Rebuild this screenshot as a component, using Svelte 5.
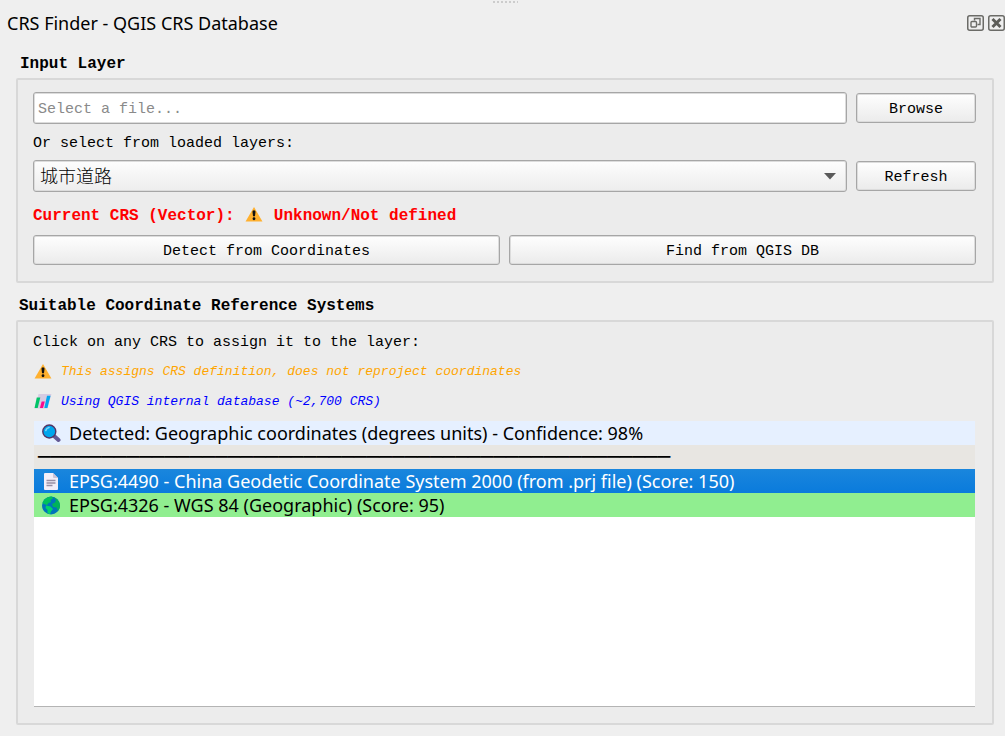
<script>
  let filePath = $state('');
  let layers = ['城市道路'];
  let layer = $state('城市道路');

  let results = [
    { icon: 'page', text: 'EPSG:4490 - China Geodetic Coordinate System 2000 (from .prj file) (Score: 150)' },
    { icon: 'globe', text: 'EPSG:4326 - WGS 84 (Geographic) (Score: 95)' }
  ];
  let selected = $state(0);

  const separator = '─'.repeat(50);
</script>

{#snippet warning()}
  <svg class="icon" viewBox="0 0 20 18" aria-hidden="true">
    <path d="M10 1 L19.5 17.5 H0.5 Z" fill="#ffb02e" />
    <path d="M8.3 6.5 a1.7 1.7 0 0 1 3.4 0 l-.6 5 h-2.2 z" fill="#111" />
    <circle cx="10" cy="14.3" r="1.6" fill="#111" />
  </svg>
{/snippet}

<div class="dock">
  <div class="handle"></div>
  <header>
    <h1>CRS Finder - QGIS CRS Database</h1>
    <button class="tool" aria-label="Float">
      <svg viewBox="0 0 17 16" fill="none" stroke="#6b6b67">
        <rect x="0.75" y="0.75" width="15.5" height="14.5" rx="2" stroke-width="1.5" />
        <path d="M7.5 5.5 V3.5 H13 V9.5 H10.5" stroke-width="1.4" />
        <rect x="4" y="6.5" width="5.5" height="5.5" rx="1" stroke-width="1.4" />
      </svg>
    </button>
    <button class="tool" aria-label="Close">
      <svg viewBox="0 0 17 16" fill="none" stroke="#6b6b67">
        <rect x="0.75" y="0.75" width="15.5" height="14.5" rx="2" stroke-width="1.5" />
        <path d="M4.5 4 L12.5 12 M12.5 4 L4.5 12" stroke="#5c5c58" stroke-width="3" />
      </svg>
    </button>
  </header>

  <h2>Input Layer</h2>
  <section class="group">
    <div class="row">
      <input type="text" placeholder="Select a file..." aria-label="File" bind:value={filePath} />
      <button class="btn side">Browse</button>
    </div>
    <label class="hint" for="layer">Or select from loaded layers:</label>
    <div class="row">
      <div class="combo">
        <select id="layer" bind:value={layer}>
          {#each layers as name}
            <option>{name}</option>
          {/each}
        </select>
        <svg class="arrow" viewBox="0 0 12 7" aria-hidden="true"><path d="M0 0 H12 L6 6.5 Z" fill="#5a5a5a" /></svg>
      </div>
      <button class="btn side">Refresh</button>
    </div>
    <p class="status">Current CRS (Vector): {@render warning()} Unknown/Not defined</p>
    <div class="row">
      <button class="btn">Detect from Coordinates</button>
      <button class="btn">Find from QGIS DB</button>
    </div>
  </section>

  <h2 class="second">Suitable Coordinate Reference Systems</h2>
  <section class="group crs">
    <p class="hint">Click on any CRS to assign it to the layer:</p>
    <p class="note orange">{@render warning()}<span>This assigns CRS definition, does not reproject coordinates</span></p>
    <p class="note blue">
      <svg class="icon" viewBox="0 0 20 18" aria-hidden="true">
        <path d="M5 1 H19.5 L15 17.5 H0.5 Z" fill="#d6cbe2" />
        <path d="M3 5 H7 L4 17 H0.5 Z" fill="#00c467" />
        <path d="M8.5 9.5 H12 L10 17 H6.5 Z" fill="#f70a8d" />
        <path d="M14.5 3 H18.5 L15 17 H11.5 Z" fill="#00a6ed" />
      </svg>
      <span>Using QGIS internal database (~2,700 CRS)</span>
    </p>
    <ul>
      <li class="item detected">
        <svg viewBox="0 0 20 20" aria-hidden="true">
          <path d="M12.5 12.5 L17.5 17" stroke="#635994" stroke-width="4" stroke-linecap="round" />
          <circle cx="8.3" cy="8.5" r="6.5" fill="#00a6ed" stroke="#533566" stroke-width="1.4" />
          <path d="M4.8 7.5 A4.2 4.2 0 0 1 8 4.5" stroke="#7fd3f7" stroke-width="1.6" fill="none" stroke-linecap="round" />
        </svg>
        <span>Detected: Geographic coordinates (degrees units) - Confidence: 98%</span>
      </li>
      <li class="item separator">{separator}</li>
      {#each results as result, i}
        <li>
          <button class="item" class:selected={selected === i} aria-pressed={selected === i} onclick={() => (selected = i)}>
            {#if result.icon === 'page'}
              <svg viewBox="0 0 20 20" aria-hidden="true">
                <path d="M4 2 H12 L17 7 V18 Q17 19 16 19 H4 Q3 19 3 18 V3 Q3 2 4 2 Z" fill="#f3eef8" />
                <path d="M12 2 L17 7 H13 Q12 7 12 6 Z" fill="#cdc4d6" />
                <path d="M5.5 9.5 H14.5 M5.5 12 H14.5 M5.5 14.5 H11.5" stroke="#998ea4" stroke-width="1.3" />
              </svg>
            {:else}
              <svg viewBox="0 0 20 20" aria-hidden="true">
                <circle cx="10" cy="10.5" r="9" fill="#0074ba" />
                <path d="M3 5 Q6 1.5 11 1.5 L12 3.5 L9.5 5 L10 7 L7.5 8 L6 10 L3 9 L1.5 8 Z" fill="#00c15c" />
                <path d="M12.5 2 Q18.5 4.5 19 10.5 Q18.8 13.5 17 15.8 L15.5 12.5 L12 12 L11 9 L14 7.5 L15 5 Z" fill="#00b35a" />
                <path d="M5 10.5 L9.5 11.5 L12 14 L10 16.5 L9 19.3 L6.5 18 L6.5 15 L4.5 13 Z" fill="#00d26a" />
              </svg>
            {/if}
            <span>{result.text}</span>
          </button>
        </li>
      {/each}
    </ul>
  </section>
</div>

<style>
  :global(body) {
    margin: 0;
    background: #efefef;
  }
  .dock {
    box-sizing: border-box;
    display: flex;
    flex-direction: column;
    min-height: 100vh;
    padding: 0 11px 11px 16px;
    font: 15px/20px "Liberation Mono", "Noto Sans CJK SC", monospace;
    color: #000;
  }
  .dock *, .dock *::before {
    box-sizing: border-box;
  }
  h1, h2, p, ul {
    margin: 0;
    padding: 0;
  }
  .handle {
    align-self: center;
    width: 26px;
    height: 4px;
    background: radial-gradient(circle, #ccc 1px, transparent 1px) 0 0 / 4px 4px;
  }
  header {
    display: flex;
    align-items: center;
    gap: 4px;
    height: 37px;
    margin: 0 -11px 0 -9px;
  }
  h1 {
    flex: 1;
    font: 18px/24px "Noto Sans", sans-serif;
  }
  .tool {
    width: 17px;
    height: 16px;
    padding: 0;
    border: none;
    background: none;
  }
  .tool svg {
    display: block;
    width: 17px;
    height: 16px;
  }
  h2 {
    margin: 13px 0 4px 4px;
    font-size: 16px;
    line-height: 20px;
  }
  h2.second {
    margin-left: 3px;
  }
  .group {
    display: flex;
    flex-direction: column;
    gap: 8px;
    padding: 12px 16px 16px 15px;
    border: 2px solid #d8d8d8;
    border-radius: 2px;
    background: #ececec;
  }
  .row {
    display: flex;
    align-items: center;
    gap: 9px;
  }
  .hint {
    padding-top: 4px;
    line-height: 16px;
  }
  input, select {
    flex: 1;
    min-width: 0;
    height: 32px;
    border: 1px solid #a6a6a6;
    border-radius: 3px;
    box-shadow: inset 0 0 0 1px #dcdcdc;
    color: #000;
  }
  input {
    padding: 2px 4px 0;
    background: #fff;
    font: inherit;
  }
  input::placeholder {
    color: #8a8a8a;
  }
  .combo {
    flex: 1;
    display: grid;
    align-items: center;
  }
  .combo > * {
    grid-area: 1 / 1;
  }
  select {
    appearance: none;
    padding: 0 30px 2px 6px;
    background: linear-gradient(#fdfdfd, #ededed);
    font: 18px "Noto Sans CJK SC", sans-serif;
    font-weight: 300;
  }
  .arrow {
    justify-self: end;
    width: 12px;
    height: 7px;
    margin-right: 11px;
    pointer-events: none;
  }
  .btn {
    flex: 1;
    height: 30px;
    padding: 3px 0 0;
    border: 1px solid #a6a6a6;
    border-radius: 3px;
    box-shadow: inset 0 0 0 1px #dcdcdc;
    background: linear-gradient(#fefefe, #ebebeb);
    font: inherit;
    color: #000;
  }
  .side {
    flex: 0 0 120px;
  }
  .icon {
    width: 20px;
    height: 16px;
  }
  .status {
    padding-top: 6px;
    font-size: 16px;
    font-weight: bold;
    line-height: 21px;
    color: #f00;
  }
  .status .icon {
    vertical-align: -2px;
  }
  .crs {
    flex: 1;
    gap: 10px;
    padding-top: 9px;
  }
  .note {
    display: flex;
    align-items: center;
    gap: 8px;
    font-size: 13px;
    font-style: italic;
  }
  .note span {
    padding-top: 2px;
    line-height: 18px;
  }
  .orange {
    color: #ffa500;
  }
  .blue {
    color: #00f;
  }
  ul {
    flex: 1;
    margin: 0 1px;
    border-bottom: 1px solid #b4b4b4;
    background: #fff;
    list-style: none;
  }
  .item {
    display: flex;
    align-items: center;
    gap: 8px;
    width: 100%;
    height: 24px;
    padding: 0 7px;
    border: none;
    background: #90ee90;
    font: 18px/24px "Noto Sans", sans-serif;
    color: #000;
    text-align: left;
    white-space: nowrap;
    overflow: hidden;
  }
  .item svg {
    flex: none;
    width: 20px;
    height: 20px;
  }
  .item.detected {
    background: #e6f0ff;
  }
  .item.separator {
    padding: 0 4px;
    background: #e8e6e2;
    font: bold 21px/22px "DejaVu Sans Mono", monospace;
  }
  .item.selected {
    background: linear-gradient(#1a86dd, #0a7bdc);
    color: #fff;
  }
</style>
